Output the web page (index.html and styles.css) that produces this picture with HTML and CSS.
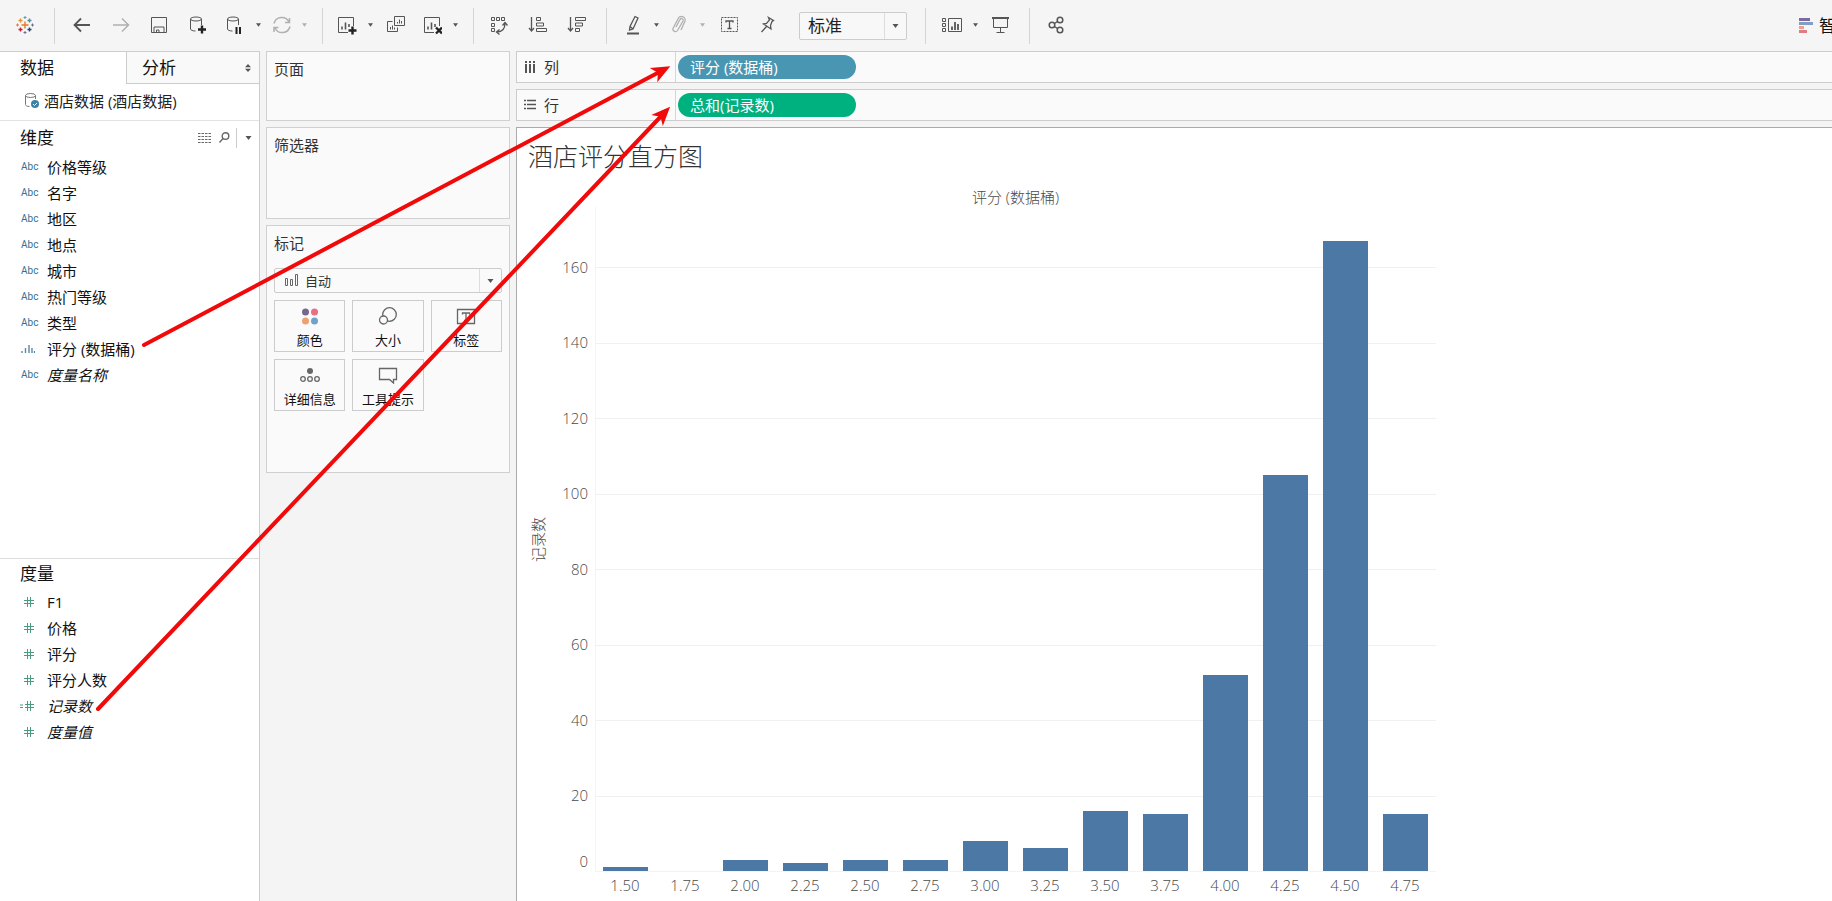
FILE: index.html
```html
<!DOCTYPE html>
<html lang="zh-CN">
<head>
<meta charset="utf-8">
<title>酒店评分直方图</title>
<link rel="stylesheet" href="styles.css">
</head>
<body>
<div class="app">
  <header class="toolbar">
    <div class="group group-logo">
      <svg class="icon" viewBox="0 0 20 20" fill="none" stroke-width="1.4">
        <path stroke="#e8762d" d="M10 6.500v7M6.500 10h7"/>
        <path stroke="#eb912c" d="M5.500 3.500v4M3.500 5.500h4"/>
        <path stroke="#59879b" d="M14.500 3.500v4M12.500 5.500h4"/>
        <path stroke="#c72035" d="M5.500 12.500v4M3.500 14.500h4"/>
        <path stroke="#1f447e" d="M14.500 12.500v4M12.500 14.500h4"/>
        <path stroke="#5b9bb0" stroke-width="1" d="M10 1v3M8.500 2.500h3"/>
        <path stroke="#6b6f9c" stroke-width="1" d="M10 16v3M8.500 17.500h3M17.500 8.500v3M16 10h3"/>
        <path stroke="#e07a4a" stroke-width="1" d="M2.500 8.500v3M1 10h3"/>
      </svg>
    </div>
    <div class="group">
      <button class="tool" aria-label="撤消"><svg class="icon" viewBox="0 0 20 20"><path stroke-width="1.800" d="M18 10H3M9 3.500L2.500 10 9 16.500"/></svg></button>
      <button class="tool muted" aria-label="重做"><svg class="icon" viewBox="0 0 20 20"><path stroke-width="1.500" d="M2 10h15M11 3.500l6.500 6.500-6.500 6.500"/></svg></button>
      <button class="tool" aria-label="保存"><svg class="icon" viewBox="0 0 20 20"><path d="M1.500 2.500h15v15h-15zM4 17.500v-5.500h10v5.500M6.500 17.500v-2.500h2.500v2.500"/></svg></button>
      <button class="tool" aria-label="新建数据源"><svg class="icon" viewBox="0 0 20 20"><ellipse cx="7" cy="4" rx="5.500" ry="2"/><path d="M1.500 4v10c0 1 2 2 5 2M12.500 4v6"/><path stroke="#222" stroke-width="2.400" d="M13 10.500v8M9 14.500h8"/></svg></button>
      <button class="tool tool-split" aria-label="暂停自动更新"><svg class="icon" viewBox="0 0 20 20"><ellipse cx="8" cy="4" rx="5.500" ry="2"/><path d="M2.500 4v10c0 1 2 2 5 2M13.500 4v6"/><path stroke="#222" stroke-width="2" d="M11.500 12v7M15 12v7"/></svg></button>
      <button class="caret" aria-label="更新选项"><svg class="tri" viewBox="0 0 6 4"><path d="M0 0h6L3 4z"/></svg></button>
      <button class="tool tool-split muted" aria-label="运行更新"><svg class="icon" viewBox="0 0 20 20"><path stroke-width="1.500" d="M3 8.500A8 8 0 0 1 18 7M19 11.500A8 8 0 0 1 4 13M18.500 3v4.500h-4.500M3 17v-4.500h4.500"/></svg></button>
      <button class="caret muted" aria-label="运行选项"><svg class="tri" viewBox="0 0 6 4"><path d="M0 0h6L3 4z"/></svg></button>
    </div>
    <div class="group">
      <button class="tool tool-split" aria-label="新建工作表"><svg class="icon" viewBox="0 0 20 20"><path d="M11 17.500H1.500v-15h15V11"/><path stroke-width="1.600" d="M5 14.500v-3M8.500 14.500v-7M12 12V9"/><path stroke="#222" stroke-width="2.400" d="M15.500 11.500v8M11.500 15.500h8"/></svg></button>
      <button class="caret" aria-label="新建选项"><svg class="tri" viewBox="0 0 6 4"><path d="M0 0h6L3 4z"/></svg></button>
      <button class="tool" aria-label="复制工作表"><svg class="icon" viewBox="0 0 20 20"><path d="M8.500 1.500h10v9h-10zM6.500 6.500h-5v10h10v-4M11.500 8.500V7M13.500 8.500V4.500M15.500 8.500V6M4.500 14.500V12M6.500 14.500v-4M8.500 14.500V12.500"/></svg></button>
      <button class="tool tool-split" aria-label="清除工作表"><svg class="icon" viewBox="0 0 20 20"><path d="M12 17.500H2.500v-15h15V11"/><path stroke-width="1.600" d="M6 14.500v-3M9.500 14.500v-7M13 12V9"/><path stroke="#222" stroke-width="2.400" d="M14 12.500l6 6M20 12.500l-6 6"/></svg></button>
      <button class="caret" aria-label="清除选项"><svg class="tri" viewBox="0 0 6 4"><path d="M0 0h6L3 4z"/></svg></button>
    </div>
    <div class="group group-sort">
      <button class="tool" aria-label="交换行和列"><svg class="icon" viewBox="0 0 20 20"><path d="M2.500 2.500h3v3h-3zM7.500 2.500h3v3h-3zM12.500 2.500h3v3h-3zM2.500 8.500h3v3h-3zM2.500 13.500h3v3h-3z"/><path stroke-width="1.300" d="M8 17c5 0 8-3 8-9M13.500 10.500L16 7.500l2.500 3M10.500 14.500L7.500 17l3 2.500"/></svg></button>
      <button class="tool" aria-label="升序排序"><svg class="icon" viewBox="0 0 20 20"><path stroke-width="1.300" d="M3.500 2v14M1 13l2.500 3L6 13"/><path d="M8.500 2.500h4v3h-4zM8.500 8h7v3h-7zM8.500 13.500h10v3h-10z"/></svg></button>
      <button class="tool" aria-label="降序排序"><svg class="icon" viewBox="0 0 20 20"><path stroke-width="1.300" d="M3.500 2v14M1 13l2.500 3L6 13"/><path d="M8.500 2.500h10v3h-10zM8.500 8h7v3h-7zM8.500 13.500h4v3h-4z"/></svg></button>
    </div>
    <div class="group group-format">
      <button class="tool tool-split" aria-label="突出显示"><svg class="icon" viewBox="0 0 20 20"><path stroke-width="1.300" d="M12 1.500l3 1.500-5 11-3.500 1 .5-3.500zM7 11.500l3 2.500"/><path stroke-width="2" d="M4 18.500h12"/></svg></button>
      <button class="caret" aria-label="突出显示选项"><svg class="tri" viewBox="0 0 6 4"><path d="M0 0h6L3 4z"/></svg></button>
      <button class="tool tool-split muted" aria-label="组成员"><svg class="icon" viewBox="0 0 20 20"><path stroke-width="1.300" d="M7 12l4-7.500a1.500 1.500 0 0 1 3 1.500L8.500 15.500a2.500 2.500 0 0 1-4.500-2L9 4a3.500 3.500 0 0 1 7 2l-4 9"/></svg></button>
      <button class="caret muted" aria-label="组选项"><svg class="tri" viewBox="0 0 6 4"><path d="M0 0h6L3 4z"/></svg></button>
      <button class="tool" aria-label="显示标记标签"><svg class="icon" viewBox="0 0 20 20"><path stroke-dasharray="2 1" d="M3.500 2.500h16v14h-16z"/><path stroke-width="1.300" d="M8 7.500V6h7v1.500M11.500 6v7.500M9.500 13.500h4"/></svg></button>
      <button class="tool" aria-label="固定轴"><svg class="icon" viewBox="0 0 20 20"><path stroke-width="1.300" d="M11.500 2.500l5 3-1.500 1-1.500 4 .5 3.500-7.500-5 3-.5 3-3.500zM9.500 11.500l-5 5.500"/></svg></button>
      <span class="fit-box">
        <select class="fit-select" aria-label="适合"><option>标准</option></select>
        <svg class="fit-caret" viewBox="0 0 6 4"><path d="M0 0h6L3 4z"/></svg>
      </span>
    </div>
    <div class="group group-view">
      <button class="tool tool-split" aria-label="显示/隐藏卡"><svg class="icon" viewBox="0 0 20 20"><path d="M.5 3.500h3v3h-3zM.5 8.500h3v3h-3zM.5 13.500h3v3h-3zM6.500 3.500h13v13h-13z"/><path stroke-width="1.800" d="M10 15v-3.500M13 15V7M16 15v-6"/></svg></button>
      <button class="caret" aria-label="卡选项"><svg class="tri" viewBox="0 0 6 4"><path d="M0 0h6L3 4z"/></svg></button>
      <button class="tool" aria-label="演示模式"><svg class="icon" viewBox="0 0 20 20"><path stroke-width="2" d="M1 3h17"/><path d="M2.500 4v8.500h14V4M9.500 12.500v4.500M5.500 17.500h8"/></svg></button>
    </div>
    <div class="group group-share">
      <button class="tool" aria-label="共享"><svg class="icon" viewBox="0 0 20 20"><g stroke-width="1.500"><circle cx="5" cy="10" r="2.800"/><circle cx="13" cy="5" r="2.800"/><circle cx="13" cy="15" r="2.800"/><path d="M7.500 8.500l3-2M7.500 11.500l3 2"/></g></svg></button>
    </div>
    <button class="show-me">
      <svg class="show-me-icon" viewBox="0 0 14 16"><path fill="#7b6a9c" d="M0 0h11v3H0z"/><path fill="#7f9dc6" d="M0 4h14v3H0z"/><path fill="#e9a188" d="M0 8h5v3H0z"/><path fill="#e07a86" d="M0 12h8v3H0z"/></svg>
      <span>智</span>
    </button>
  </header>

  <main class="workspace">
    <aside class="data-pane">
      <div class="tabs">
        <button class="tab tab-active">数据</button>
        <button class="tab tab-rest">分析
          <svg class="tab-arrows" viewBox="0 0 6 8"><path d="M0 3.300h6L3 0zM0 4.700h6L3 8z"/></svg>
        </button>
      </div>
      <div class="source">
        <svg class="source-icon" viewBox="0 0 16 18"><ellipse cx="6.500" cy="3.500" rx="5" ry="2"/><path d="M1.500 3.500v9c0 1 1.500 2 4 2M11.500 3.500V7"/><circle class="badge" cx="11" cy="12" r="4"/><path class="check" d="M9 12l1.500 1.500L13 11"/></svg>
        <span>酒店数据 (酒店数据)</span>
      </div>
      <section class="fields fields-dim">
        <div class="fields-head">
          <h2>维度</h2>
          <div class="fields-tools">
            <button class="mini" aria-label="查看数据"><svg class="icon-grid" viewBox="0 0 13 10"><path stroke-dasharray="2.500 1" d="M0 .5h13M0 3.500h13M0 6.500h13M0 9.500h13"/></svg></button>
            <button class="mini" aria-label="查找字段"><svg class="icon-find" viewBox="0 0 11 11"><circle cx="6.500" cy="4" r="3.300"/><path d="M4 6.500L.5 10.500"/></svg></button>
            <button class="mini mini-menu" aria-label="菜单"><svg class="tri" viewBox="0 0 6 4"><path d="M0 0h6L3 4z"/></svg></button>
          </div>
        </div>
        <ul class="list">
          <li><span class="type">Abc</span>价格等级</li>
          <li><span class="type">Abc</span>名字</li>
          <li><span class="type">Abc</span>地区</li>
          <li><span class="type">Abc</span>地点</li>
          <li><span class="type">Abc</span>城市</li>
          <li><span class="type">Abc</span>热门等级</li>
          <li><span class="type">Abc</span>类型</li>
          <li><span class="type"><svg class="icon-bin" viewBox="0 0 14 8"><path d="M1 6v2M4.500 3v5M8 0v8M11 3v5M13.500 6v2"/></svg></span>评分 (数据桶)</li>
          <li><span class="type">Abc</span><em>度量名称</em></li>
        </ul>
      </section>
      <section class="fields fields-measure">
        <div class="fields-head"><h2>度量</h2></div>
        <ul class="list">
          <li><span class="type"><svg class="icon-num" viewBox="0 0 14 10"><path d="M6.500 0v10M9.500 0v10M3 3.500h10M3 6.500h10"/></svg></span>F1</li>
          <li><span class="type"><svg class="icon-num" viewBox="0 0 14 10"><path d="M6.500 0v10M9.500 0v10M3 3.500h10M3 6.500h10"/></svg></span>价格</li>
          <li><span class="type"><svg class="icon-num" viewBox="0 0 14 10"><path d="M6.500 0v10M9.500 0v10M3 3.500h10M3 6.500h10"/></svg></span>评分</li>
          <li><span class="type"><svg class="icon-num" viewBox="0 0 14 10"><path d="M6.500 0v10M9.500 0v10M3 3.500h10M3 6.500h10"/></svg></span>评分人数</li>
          <li><span class="type"><svg class="icon-num" viewBox="0 0 14 10"><path d="M6.500 0v10M9.500 0v10M4 3.500h9M4 6.500h9M-1 4h3M-1 6.500h3"/></svg></span><em>记录数</em></li>
          <li><span class="type"><svg class="icon-num" viewBox="0 0 14 10"><path d="M6.500 0v10M9.500 0v10M3 3.500h10M3 6.500h10"/></svg></span><em>度量值</em></li>
        </ul>
      </section>
    </aside>

    <div class="cards">
      <section class="card card-pages"><h3>页面</h3></section>
      <section class="card card-filters"><h3>筛选器</h3></section>
      <section class="card card-marks">
        <h3>标记</h3>
        <div class="mark-type">
          <svg class="mark-icon" viewBox="0 0 13 12"><path d="M.5 4.500h2v7h-2zM5.500 5.500h2v6h-2zM10.500.5h2v11h-2z"/></svg>
          <select class="mark-select" aria-label="标记类型"><option>自动</option></select>
          <svg class="mark-caret" viewBox="0 0 6 4"><path d="M0 0h6L3 4z"/></svg>
        </div>
        <div class="mark-grid">
          <button class="mark"><svg class="mark-pic" viewBox="0 0 20 18"><g stroke="none"><circle cx="5.500" cy="5" r="3.500" fill="#76678f"/><circle cx="14.500" cy="5" r="3.500" fill="#ea6f86"/><circle cx="5.500" cy="14" r="3.500" fill="#f0a070"/><circle cx="14.500" cy="14" r="3.500" fill="#6fa3cb"/></g></svg>颜色</button>
          <button class="mark"><svg class="mark-pic" viewBox="0 0 20 18"><circle cx="11.500" cy="7.500" r="6.800"/><circle cx="5.500" cy="13" r="4" fill="#fafafa"/></svg>大小</button>
          <button class="mark"><svg class="mark-pic" viewBox="0 0 20 18"><path d="M1.500 2.500h17v14h-17zM6.500 7.500V6h7v1.500M10 6v7.500M8 13.500h4"/></svg>标签</button>
          <button class="mark"><svg class="mark-pic" viewBox="0 0 20 18"><circle cx="10" cy="5" r="3" fill="#666" stroke="none"/><circle cx="3" cy="13" r="2.300"/><circle cx="10" cy="13" r="2.300"/><circle cx="17" cy="13" r="2.300"/></svg>详细信息</button>
          <button class="mark"><svg class="mark-pic" viewBox="0 0 20 18"><path d="M1.500 2.500h17v11h-3v3.500l-4-3.500h-10z"/></svg>工具提示</button>
        </div>
      </section>
    </div>

    <div class="sheet">
      <div class="shelf">
        <div class="shelf-name"><svg class="shelf-icon" viewBox="0 0 12 12"><path stroke-width="2" d="M2 0v2M6 0v2M10 0v2M2 3v9M6 3v9M10 3v9"/></svg>列</div>
        <button class="pill pill-blue">评分 (数据桶)</button>
      </div>
      <div class="shelf">
        <div class="shelf-name"><svg class="shelf-icon" viewBox="0 0 12 12"><path stroke-width="1.600" d="M0 1.500h2M0 5.500h2M0 9.500h2M3 1.500h9M3 5.500h9M3 9.500h9"/></svg>行</div>
        <button class="pill pill-green">总和(记录数)</button>
      </div>
      <section class="view">
        <h1>酒店评分直方图</h1>
        <div class="chart">
          <div class="column-title">评分 (数据桶)</div>
          <div class="axis-title"><span>记录数</span></div>
          <div class="ticks">
            <div class="band band-first"><span>20</span><span>0</span></div>
            <div class="band"><span>40</span></div>
            <div class="band"><span>60</span></div>
            <div class="band"><span>80</span></div>
            <div class="band"><span>100</span></div>
            <div class="band"><span>120</span></div>
            <div class="band"><span>140</span></div>
            <div class="band"><span>160</span></div>
          </div>
          <div class="plot">
            <div class="gridlines">
              <div class="band"></div><div class="band"></div><div class="band"></div><div class="band"></div>
              <div class="band"></div><div class="band"></div><div class="band"></div><div class="band"></div>
            </div>
            <div class="bar" style="height:calc(100% * 1 / 176)"></div>
            <div class="bar" style="height:0"></div>
            <div class="bar" style="height:calc(100% * 3 / 176)"></div>
            <div class="bar" style="height:calc(100% * 2 / 176)"></div>
            <div class="bar" style="height:calc(100% * 3 / 176)"></div>
            <div class="bar" style="height:calc(100% * 3 / 176)"></div>
            <div class="bar" style="height:calc(100% * 8 / 176)"></div>
            <div class="bar" style="height:calc(100% * 6 / 176)"></div>
            <div class="bar" style="height:calc(100% * 16 / 176)"></div>
            <div class="bar" style="height:calc(100% * 15 / 176)"></div>
            <div class="bar" style="height:calc(100% * 52 / 176)"></div>
            <div class="bar" style="height:calc(100% * 105 / 176)"></div>
            <div class="bar" style="height:calc(100% * 167 / 176)"></div>
            <div class="bar" style="height:calc(100% * 15 / 176)"></div>
          </div>
          <div class="bins">
            <span>1.50</span><span>1.75</span><span>2.00</span><span>2.25</span><span>2.50</span><span>2.75</span><span>3.00</span>
            <span>3.25</span><span>3.50</span><span>3.75</span><span>4.00</span><span>4.25</span><span>4.50</span><span>4.75</span>
          </div>
        </div>
      </section>
    </div>
  </main>

  <svg class="arrows" width="700" height="720" viewBox="0 0 700 720">
    <defs>
      <marker id="head" markerUnits="userSpaceOnUse" markerWidth="20" markerHeight="18" refX="13" refY="9" orient="auto"><path d="M0 1l19 8-19 8 5-8z"/></marker>
    </defs>
    <path class="arrow" marker-end="url(#head)" d="M144 345L665 69"/>
    <path class="arrow" marker-end="url(#head)" d="M98 709L666 111"/>
  </svg>
</div>
</body>
</html>
```

FILE: styles.css
```css
* { box-sizing: border-box; }

body {
  margin: 0;
  overflow: hidden;
  background: #f4f4f4;
  color: #222;
  font: 15px/20px "Open Sans", "Noto Sans CJK SC", sans-serif;
}

h1, h2, h3, ul { margin: 0; padding: 0; font-weight: 400; }
button, select { margin: 0; padding: 0; border: 0; background: none; color: inherit; font: inherit; }

.app { position: relative; display: flex; flex-direction: column; height: 100vh; }

/* Toolbar */
.toolbar { display: flex; height: 51px; flex: none; padding-top: 8px; background: #f5f5f5; }
.group { display: flex; align-items: center; height: 36px; padding: 0 12px 2px 7px; border-right: 1px solid #d4d4d4; flex: none; }
.group-logo { width: 55px; padding: 0 0 2px 15px; }
.group-sort { padding: 0 10px 2px 5px; }
.group-format { padding: 0 18px 2px 9px; }
.group-view { padding: 0 9px 2px 9px; }
.group-share { border-right: 0; }
.tool { display: flex; align-items: center; justify-content: center; width: 39px; height: 28px; }
.tool-split { width: 34px; }
.icon { display: block; width: 20px; height: 20px; fill: none; }
.tool .icon { stroke: #555; }
.tool.muted .icon { stroke: #b0b0b0; }
.caret { display: flex; align-items: center; justify-content: center; width: 12px; height: 28px; }
.tri { width: 6px; height: 4px; fill: #555; }
.caret .tri { width: 5px; }
.caret.muted .tri { fill: #b0b0b0; }
.fit-box { position: relative; margin: 2px 0 0 13px; }
.fit-select { display: block; width: 108px; height: 28px; padding-left: 8px; border: 1px solid #ccc; border-radius: 2px; background: linear-gradient(#ddd, #ddd) 84px 0 / 1px 100% no-repeat #f8f8f8; font-size: 17px; appearance: none; }
.fit-caret { position: absolute; top: 12px; right: 8px; width: 7px; height: 4px; fill: #555; }
.show-me { display: flex; align-items: center; gap: 6px; width: 33px; height: 36px; margin-left: auto; color: #111; font-size: 17px; white-space: nowrap; }
.show-me-icon { width: 14px; height: 16px; flex: none; }

/* Workspace */
.workspace { display: grid; grid-template-columns: 260px 244px minmax(0, 1fr); column-gap: 6px; flex: 1; min-height: 0; }

.data-pane { display: flex; flex-direction: column; border: 1px solid #ccc; border-width: 1px 1px 0 0; background: #fff; }
.tabs { display: flex; height: 32px; flex: none; color: #111; font-size: 17px; }
.tab { display: flex; align-items: center; text-align: left; }
.tab-active { width: 126px; padding-left: 20px; }
.tab-rest { flex: 1; justify-content: space-between; padding: 0 8px 0 15px; border: 1px solid #ccc; border-width: 0 0 1px 1px; background: #f9f9f9; }
.tab-arrows { width: 6px; height: 8px; fill: #555; }
.source { display: flex; align-items: center; gap: 4px; height: 37px; flex: none; padding: 0 0 2px 24px; border-bottom: 1px solid #e2e2e2; }
.source-icon { width: 16px; height: 18px; fill: none; stroke: #777; }
.source-icon .badge { fill: #3f81a4; stroke: none; }
.source-icon .check { stroke: #fff; }

.fields-dim { flex: 438 1 0; }
.fields-measure { flex: 342 1 0; border-top: 1px solid #ddd; }
.fields-head { display: flex; align-items: center; justify-content: space-between; height: 33px; padding-left: 20px; color: #111; }
.fields-measure .fields-head { height: 30px; }
.fields-head h2 { font-size: 17px; line-height: 24px; }
.fields-tools { display: flex; align-items: center; }
.mini { display: flex; align-items: center; height: 20px; padding: 0 4px; }
.mini-menu { margin-left: 2px; padding: 0 7px 0 8px; border-left: 1px solid #ccc; }
.mini-menu .tri { width: 7px; }
.icon-grid { width: 13px; height: 10px; fill: none; stroke: #666; }
.icon-find { width: 11px; height: 11px; fill: none; stroke: #666; stroke-width: 1.4; }
.list { color: #111; list-style: none; }
.list li { display: flex; align-items: center; height: 26px; padding-left: 20px; }
.type { display: flex; align-items: center; width: 27px; padding-left: 1px; color: #35708f; font-family: Roboto, sans-serif; font-size: 10px; }
.icon-bin { width: 14px; height: 8px; fill: none; stroke: #5a8aa6; stroke-width: 1.4; }
.icon-num { width: 14px; height: 10px; overflow: visible; fill: none; stroke: #4a9b83; }

.cards { display: flex; flex-direction: column; gap: 6px; }
.card { padding: 7px; border: 1px solid #d0d0d0; background: #fafafa; color: #333; }
.card h3 { font-size: 15px; line-height: 20px; }
.card-pages { height: 70px; }
.card-filters { height: 92px; }
.card-marks { height: 248px; }
.mark-type { position: relative; margin: 15px 0 7px; }
.mark-select { display: block; width: 100%; height: 25px; padding-left: 30px; border: 1px solid #ccc; border-radius: 2px; background: linear-gradient(#ddd, #ddd) calc(100% - 21px) 0 / 1px 100% no-repeat #fafafa; font-size: 13px; appearance: none; }
.mark-icon { position: absolute; top: 6px; left: 11px; width: 13px; height: 12px; fill: none; stroke: #666; }
.mark-caret { position: absolute; top: 11px; right: 8px; width: 7px; height: 4px; fill: #555; }
.mark-grid { display: grid; grid-template-columns: repeat(3, 1fr); gap: 7px; }
.mark { display: flex; flex-direction: column; align-items: center; height: 52px; padding-top: 6px; border: 1px solid #ccc; color: #111; font-size: 13px; line-height: 18px; white-space: nowrap; gap: 6px; }
.mark-pic { width: 20px; height: 18px; flex: none; fill: none; stroke: #666; stroke-width: 1.3; }

/* Shelves and view */
.sheet { display: flex; flex-direction: column; min-width: 0; }
.shelf { display: flex; align-items: center; height: 32px; flex: none; margin-bottom: 6px; border: 1px solid #ccc; border-right: 0; background: #fafafa; }
.shelf-name { display: flex; align-items: center; gap: 8px; width: 159px; height: 30px; padding-left: 7px; border-right: 1px solid #e4d0d4; color: #333; }
.shelf-icon { width: 12px; height: 12px; fill: none; stroke: #555; }
.pill { width: 178px; height: 24px; margin-left: 2px; padding-left: 12px; border-radius: 12px; color: #fff; text-align: left; }
.pill-blue { background: #4996b2; }
.pill-green { background: #00b180; }

.view { display: flex; flex-direction: column; flex: 1; min-height: 0; padding: 10px 0 0 11px; border: 1px solid #aaa; border-width: 1px 0 0 1px; background: #fff; }
.view h1 { color: #333; font-size: 25px; font-weight: 300; line-height: 36px; }
.chart { display: grid; grid-template-columns: 20px 39px auto; grid-template-rows: 20px minmax(0, 1fr) 29px; justify-content: start; column-gap: 4px; flex: 1; min-height: 0; margin-top: 13px; color: #4a4a4a; font-weight: 300; }
.column-title { grid-column: 3; text-align: center; }
.axis-title { display: flex; align-items: center; justify-content: center; grid-area: 2 / 1; }
.axis-title span { writing-mode: vertical-rl; text-orientation: sideways; transform: rotate(180deg); }
.ticks { display: flex; flex-direction: column-reverse; grid-area: 2 / 2; padding-right: 3px; text-align: right; }
.band { flex: 0 0 calc(100% * 20 / 176); }
.ticks span { display: block; height: 20px; margin-top: -11px; }
.band-first { display: flex; flex-direction: column; justify-content: space-between; padding-bottom: 1px; }
.plot { position: relative; display: grid; grid-auto-columns: 60px; grid-auto-flow: column; align-items: end; grid-area: 2 / 3; border: 1px solid #f3f3f3; border-width: 0 0 1px 1px; }
.gridlines { position: absolute; inset: 0; display: flex; flex-direction: column-reverse; }
.gridlines .band { border-top: 1px solid #f0f0f0; }
.bar { position: relative; width: 45px; margin-left: 7px; background: #4c78a6; }
.bins { display: grid; grid-auto-columns: 60px; grid-auto-flow: column; grid-area: 3 / 3; padding-top: 3px; text-align: center; }

/* Annotation arrows over the panes */
.arrows { position: absolute; top: 0; left: 0; pointer-events: none; fill: #f00a0a; }
.arrow { fill: none; stroke: #f00a0a; stroke-width: 4; stroke-linecap: round; }
```
